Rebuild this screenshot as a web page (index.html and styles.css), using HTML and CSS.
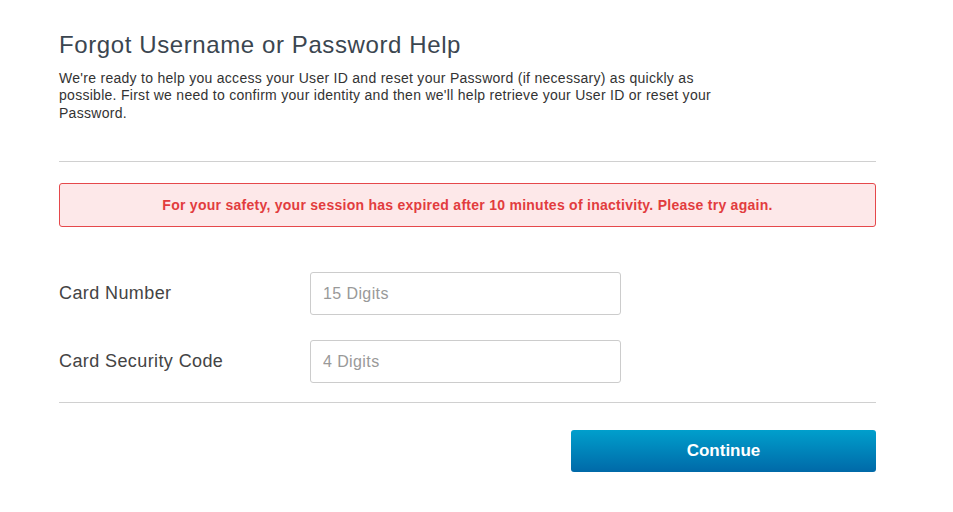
FILE: index.html
```html
<!DOCTYPE html>
<html lang="en">
<head>
    <meta charset="UTF-8">
    <meta name="viewport" content="width=device-width, initial-scale=1.0">
    <title>Forgot Username or Password Help</title>
    <link rel="stylesheet" href="styles.css">
</head>
<body>
    <div class="recover">
        <h1 class="title">Forgot Username or Password Help</h1>
        <p class="intro">We're ready to help you access your User ID and reset your Password (if necessary) as quickly as possible. First we need to confirm your identity and then we'll help retrieve your User ID or reset your Password.</p>

        <hr class="divider top">

        <div class="alert">For your safety, your session has expired after 10 minutes of inactivity. Please try again.</div>

        <form class="form" onsubmit="return false;">
            <div class="row">
                <label class="label" for="card">Card Number</label>
                <input class="field" id="card" type="text" placeholder="15 Digits">
            </div>
            <div class="row last">
                <label class="label" for="csc">Card Security Code</label>
                <input class="field" id="csc" type="text" placeholder="4 Digits">
            </div>

            <hr class="divider bottom">

            <div class="actions">
                <button class="btn" type="submit">Continue</button>
            </div>
        </form>
    </div>
</body>
</html>
```

FILE: styles.css
```css
body {
    margin: 0;
    background-color: #fff;
    font-family: Arial, "Liberation Sans", sans-serif;
    color: #333;
    letter-spacing: 0.025em;
}

.recover {
    width: 817px;
    margin: 0 0 0 59px;
    padding-top: 31px;
}

.title {
    margin: 0;
    font-size: 24px;
    font-weight: normal;
    line-height: 1.2;
    letter-spacing: 0.025em;
    color: #3b4650;
}

.intro {
    max-width: 672px;
    margin: 10px 0 0;
    font-size: 14px;
    line-height: 17.5px;
    letter-spacing: 0.02em;
    color: #333;
}

.divider {
    border: none;
    border-top: 1px solid #d0d0d0;
    margin: 0;
}

.divider.top {
    margin-top: 39px;
}

.alert {
    margin-top: 21px;
    height: 44px;
    box-sizing: border-box;
    display: flex;
    align-items: center;
    justify-content: center;
    background-color: #fde8e9;
    border: 1px solid #e5484b;
    border-radius: 3px;
    color: #e23c3e;
    font-size: 14px;
    font-weight: bold;
    letter-spacing: 0.019em;
}

.form {
    margin-top: 45px;
}

.row {
    display: flex;
    align-items: center;
    margin-bottom: 25px;
}

.row.last {
    margin-bottom: 19px;
}

.label {
    width: 251px;
    font-size: 18px;
    color: #444;
}

.field {
    width: 311px;
    height: 43px;
    box-sizing: border-box;
    padding: 0 12px;
    border: 1px solid #ccc;
    border-radius: 3px;
    font-family: inherit;
    font-size: 16px;
    letter-spacing: 0.025em;
    color: #333;
}

.field::placeholder {
    color: #999;
}

.divider.bottom {
    margin-bottom: 27px;
}

.actions {
    display: flex;
    justify-content: flex-end;
}

.btn {
    width: 305px;
    height: 42px;
    border: none;
    border-radius: 3px;
    background: linear-gradient(to bottom, #009fcc, #0069a8);
    color: #fff;
    font-family: inherit;
    font-size: 17px;
    font-weight: bold;
    letter-spacing: normal;
    cursor: pointer;
}

.btn:hover {
    background: linear-gradient(to bottom, #008cb8, #005c94);
}
```
